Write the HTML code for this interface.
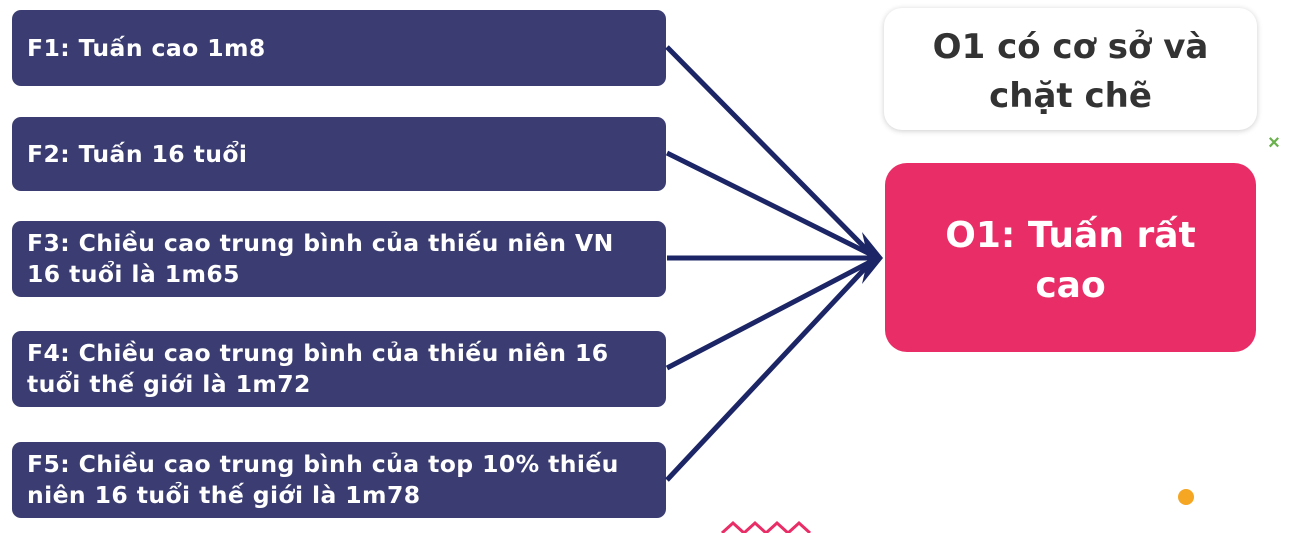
<!DOCTYPE html><html><head><meta charset="utf-8"><style>
body{margin:0;width:1293px;height:533px;background:#fff;position:relative;overflow:hidden;font-family:"DejaVu Sans","Liberation Sans",sans-serif}
.f{position:absolute;left:12px;width:654px;background:#3b3d72;border-radius:9px;color:#fff;font-weight:bold;font-size:23.5px;line-height:31px;box-sizing:border-box;padding-left:15px;display:flex;align-items:center;letter-spacing:0.4px}
.w{position:absolute;left:884px;top:8px;width:373px;height:122px;background:#fff;border-radius:18px;box-shadow:0 1px 6px rgba(0,0,0,.2);color:#333;font-weight:bold;font-size:34px;line-height:49px;text-align:center;display:flex;align-items:center;justify-content:center;padding-top:6px;box-sizing:border-box}
.p{position:absolute;left:885px;top:163px;width:371px;height:189px;background:#e92d66;border-radius:22px;color:#fff;font-weight:bold;font-size:36px;line-height:50px;text-align:center;padding-top:48px;box-sizing:border-box}
</style></head><body>
<div class="f" style="top:10px;height:76px">F1: Tuấn cao 1m8</div>
<div class="f" style="top:117px;height:74px">F2: Tuấn 16 tuổi</div>
<div class="f" style="top:221px;height:76px">F3: Chiều cao trung bình của thiếu niên VN<br>16 tuổi là 1m65</div>
<div class="f" style="top:331px;height:76px">F4: Chiều cao trung bình của thiếu niên 16<br>tuổi thế giới là 1m72</div>
<div class="f" style="top:442px;height:76px">F5: Chiều cao trung bình của top 10% thiếu<br>niên 16 tuổi thế giới là 1m78</div>
<svg style="position:absolute;left:0;top:0" width="1293" height="533">
<g stroke="#1c2566" stroke-width="5" fill="none">
<line x1="667" y1="47" x2="872" y2="255"/>
<line x1="667" y1="153" x2="872" y2="255"/>
<line x1="667" y1="258" x2="872" y2="258"/>
<line x1="667" y1="368" x2="872" y2="261"/>
<line x1="667" y1="480" x2="872" y2="261"/>
</g>
<polygon points="883,258 862,232 868,258 862,284" fill="#1c2566"/>
<text x="1274" y="149" fill="#6ab04c" font-size="20" font-weight="bold" text-anchor="middle" font-family="Liberation Sans">×</text>
<circle cx="1186" cy="497" r="8" fill="#f5a623"/>
<polyline points="722,533 733,523 744,533 755,523 766,533 777,523 788,533 799,523 810,533" stroke="#e92d66" stroke-width="3" fill="none"/>
</svg>
<div class="w">O1 có cơ sở và<br>chặt chẽ</div>
<div class="p">O1: Tuấn rất<br>cao</div>
</body></html>
